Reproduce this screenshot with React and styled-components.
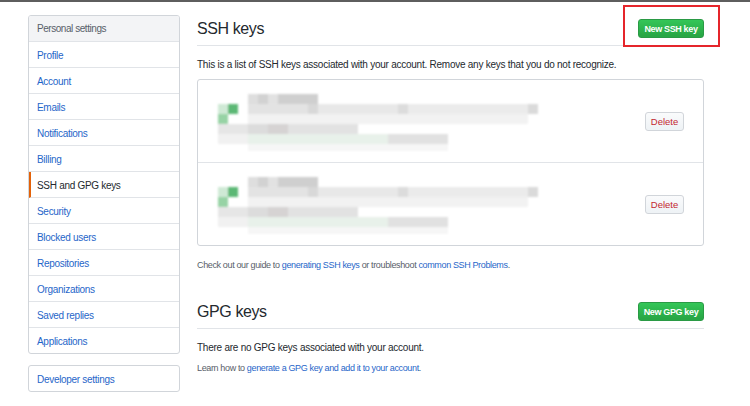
import React from "react";
import styled, { createGlobalStyle } from "styled-components";

const GlobalStyle = createGlobalStyle`
  html, body {
    margin: 0;
    padding: 0;
    background: #ffffff;
  }
  body {
    font-family: "Liberation Sans", Arial, sans-serif;
    color: #24292e;
  }
  a {
    color: #1f66c9;
    text-decoration: none;
  }
`;

const menuItems = [
  "Profile",
  "Account",
  "Emails",
  "Notifications",
  "Billing",
  "SSH and GPG keys",
  "Security",
  "Blocked users",
  "Repositories",
  "Organizations",
  "Saved replies",
  "Applications",
];

// blurred key rows: [row, startCol, endCol, colour]
const mosaic = [
  [0, 3, 3, "#dedede"],
  [0, 4, 4, "#d2d2d2"],
  [0, 5, 5, "#e2e2e2"],
  [0, 6, 9, "#cfcfcf"],
  [1, 0, 0, "#cfe9d5"],
  [1, 1, 1, "#5cb874"],
  [1, 3, 8, "#e3e3e3"],
  [1, 9, 9, "#d8d8d8"],
  [1, 10, 17, "#e8e8e8"],
  [1, 18, 18, "#dcdcdc"],
  [1, 19, 30, "#ebebeb"],
  [1, 31, 31, "#dadada"],
  [2, 0, 0, "#97d3a5"],
  [2, 3, 30, "#f2f2f2"],
  [3, 0, 2, "#e6e6e6"],
  [3, 3, 4, "#dcdcdc"],
  [3, 5, 6, "#d6d3d3"],
  [3, 7, 13, "#e2e2e2"],
  [4, 0, 2, "#f1f1f1"],
  [4, 3, 16, "#e8f1ea"],
  [4, 17, 22, "#e1e1e1"],
  [5, 3, 22, "#f6f6f6"],
];

const Mosaic = ({ id }) => (
  <KeyBlur width="326" height="62" viewBox="-2 -2 326 62">
    <defs>
      <filter id={id} x="-5%" y="-10%" width="110%" height="120%">
        <feGaussianBlur stdDeviation="0.8" />
      </filter>
    </defs>
    <g filter={`url(#${id})`}>
      {mosaic.map(([r, a, b, c], i) => (
        <rect
          key={i}
          x={a * 10}
          y={r * 10}
          width={(b - a + 1) * 10}
          height={r === 5 ? 7 : 10}
          fill={c}
        />
      ))}
    </g>
  </KeyBlur>
);

const App = () => {
  return (
    <Page>
      <GlobalStyle />
      <Sidebar>
        <Menu>
          <MenuHeading>Personal settings</MenuHeading>
          {menuItems.map((item) => (
            <MenuItem key={item} selected={item === "SSH and GPG keys"}>
              {item}
            </MenuItem>
          ))}
        </Menu>
        <Menu>
          <MenuItem>Developer settings</MenuItem>
        </Menu>
      </Sidebar>

      <Main>
        <SubHead>
          <Title>SSH keys</Title>
          <Highlight>
            <GreenButton>New SSH key</GreenButton>
          </Highlight>
        </SubHead>
        <Lead>
          This is a list of SSH keys associated with your account. Remove any
          keys that you do not recognize.
        </Lead>
        <KeyList>
          <KeyRow>
            <Mosaic id="blur-a" />
            <DeleteButton>Delete</DeleteButton>
          </KeyRow>
          <KeyRow>
            <Mosaic id="blur-b" />
            <DeleteButton>Delete</DeleteButton>
          </KeyRow>
        </KeyList>
        <Note>
          Check out our guide to <a href="#">generating SSH keys</a> or
          troubleshoot <a href="#">common SSH Problems</a>.
        </Note>

        <SubHead spaced>
          <Title>GPG keys</Title>
          <GreenButton>New GPG key</GreenButton>
        </SubHead>
        <Lead>There are no GPG keys associated with your account.</Lead>
        <Note tight>
          Learn how to{" "}
          <a href="#">generate a GPG key and add it to your account</a>.
        </Note>
      </Main>
    </Page>
  );
};
export default App;

const Page = styled.div`
  border-top: 2px solid #5e5e5e;
  display: flex;
  align-items: flex-start;
  gap: 17px;
  padding: 13px 0 0 28px;
  min-height: 391px;
  box-sizing: border-box;
`;

const Sidebar = styled.div`
  width: 152px;
  display: flex;
  flex-direction: column;
  gap: 11px;
`;

const Menu = styled.nav`
  border: 1px solid #d1d5da;
  border-radius: 3px;
  overflow: hidden;
`;

const MenuHeading = styled.div`
  height: 25px;
  line-height: 26px;
  padding-left: 8px;
  background: #f3f4f6;
  border-bottom: 1px solid #e1e4e8;
  color: #586069;
  font-size: 10px;
  letter-spacing: -0.45px;
`;

const MenuItem = styled.a`
  display: block;
  height: 25px;
  line-height: 27px;
  padding-left: ${({ selected }) => (selected ? "6px" : "8px")};
  border-left: ${({ selected }) => (selected ? "2px solid #e36209" : "0")};
  border-bottom: 1px solid #e1e4e8;
  color: ${({ selected }) => (selected ? "#24292e" : "#1f66c9")};
  font-size: 10px;
  letter-spacing: -0.3px;
  &:last-child {
    border-bottom: 0;
  }
`;

const Main = styled.main`
  width: 507px;
  display: flex;
  flex-direction: column;
`;

const SubHead = styled.div`
  display: flex;
  align-items: center;
  justify-content: space-between;
  height: 30px;
  border-bottom: 1px solid #e1e4e8;
  margin-top: ${({ spaced }) => (spaced ? "27px" : "0")};
`;

const Title = styled.h2`
  margin: 0 0 3px;
  font-size: 16px;
  font-weight: 400;
  letter-spacing: -0.4px;
  color: #24292e;
`;

const Highlight = styled.div`
  position: relative;
  &::after {
    content: "";
    position: absolute;
    left: -15px;
    right: -16px;
    top: -14px;
    bottom: -6px;
    border: 2px solid #e5252b;
  }
`;

const GreenButton = styled.button`
  display: block;
  height: 19px;
  width: 66px;
  padding: 0;
  margin-bottom: 3px;
  border: 1px solid #2a9a45;
  border-radius: 3px;
  background: linear-gradient(#34c658, #28a745 90%);
  color: #ffffff;
  font-family: "Liberation Sans", Arial, sans-serif;
  font-size: 9px;
  font-weight: 700;
  letter-spacing: -0.35px;
`;

const Lead = styled.p`
  margin: 12px 0 0;
  font-size: 10px;
  line-height: 14px;
  letter-spacing: -0.25px;
  color: #24292e;
`;

const KeyList = styled.div`
  margin-top: 7px;
  border: 1px solid #d1d5da;
  border-radius: 3px;
`;

const KeyRow = styled.div`
  display: flex;
  align-items: center;
  height: 82px;
  padding: 0 19px 0 18px;
  & + & {
    border-top: 1px solid #e1e4e8;
  }
`;

const KeyBlur = styled.svg`
  display: block;
  margin-top: 3px;
`;

const DeleteButton = styled.button`
  margin-left: auto;
  width: 39px;
  height: 19px;
  padding: 0;
  border: 1px solid #d1d5da;
  border-radius: 3px;
  background: linear-gradient(#fafbfc, #eff3f6 90%);
  color: #c3262f;
  font-family: "Liberation Sans", Arial, sans-serif;
  font-size: 9.5px;
`;

const Note = styled.p`
  margin: ${({ tight }) => (tight ? "7px 0 0" : "13px 0 0")};
  font-size: 9px;
  line-height: 12px;
  letter-spacing: -0.36px;
  color: #586069;
`;
